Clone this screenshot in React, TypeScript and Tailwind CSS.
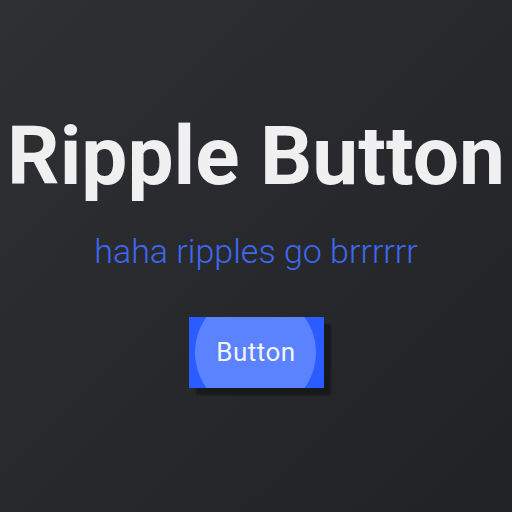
export default function App() {
  return (
    <div
      className="w-[512px] h-[512px] flex flex-col items-center pt-[115px] bg-gradient-to-br from-[#2f3034] to-[#212225] overflow-hidden"
      style={{ fontFamily: "Roboto, sans-serif" }}
    >
      <h1 className="text-[82px] leading-none font-bold text-[#f0f0f0] whitespace-nowrap">
        Ripple Button
      </h1>
      <p className="mt-[37px] text-[34px] leading-none font-light text-[#3d68f0] whitespace-nowrap">
        haha ripples go brrrrrr
      </p>
      <button className="relative mt-[49px] w-[135px] h-[71px] bg-[#2a5cff] overflow-hidden shadow-[7px_7px_2px_rgba(0,0,0,0.35)] text-[#f4f4f4] text-[26px] tracking-[0.5px]">
        <span className="absolute left-[6px] top-[-25px] w-[121px] h-[121px] rounded-full bg-[#5b82ff]" />
        <span className="relative">Button</span>
      </button>
    </div>
  );
}
